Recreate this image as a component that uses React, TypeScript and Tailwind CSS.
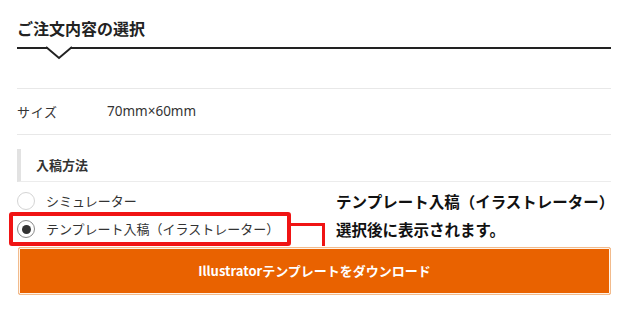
import React from 'react';

const jp = { fontFamily: '"Noto Sans CJK JP", "Noto Sans", sans-serif' };

function Radio({ checked }: { checked?: boolean }) {
  return (
    <span
      className={`flex h-[18px] w-[18px] shrink-0 items-center justify-center rounded-full border bg-white ${
        checked ? 'border-[#8a8a8a]' : 'border-[#d4d4d4]'
      }`}
    >
      {checked && <span className="h-[9px] w-[9px] rounded-full bg-[#333]" />}
    </span>
  );
}

export default function App() {
  return (
    <div className="relative h-[319px] w-[619px] overflow-hidden bg-white text-[#333]" style={jp}>
      <div className="ml-[17px] w-[594px]">
        {/* Heading with notched rule */}
        <div className="relative border-b-2 border-[#222] pt-[18px] pb-[8px]">
          <h2 className="text-[16px] font-bold leading-[21px] text-[#222]">ご注文内容の選択</h2>
          <svg
            className="absolute left-[29px] bottom-[-13px]"
            width="26"
            height="14"
            viewBox="0 0 26 14"
          >
            <polygon points="0,0 13,12 26,0" fill="#fff" />
            <polyline points="0,1 13,12 26,1" fill="none" stroke="#222" strokeWidth="2" />
          </svg>
        </div>

        {/* Size row */}
        <div className="mt-[39px] flex h-[47px] items-center border-y border-[#e8e8e8] text-[13px]">
          <span className="w-[90px] tracking-[0.05em]">サイズ</span>
          <span className="text-[13.5px]" style={{ fontFamily: '"Noto Sans", sans-serif' }}>70mm×60mm</span>
        </div>

        {/* Submission method */}
        <div className="mt-[14px] flex h-[33px] items-center border-b border-[#ececec] border-l-4 border-l-[#e2e2e2] pl-[15px]">
          <span className="text-[13px] font-bold">入稿方法</span>
        </div>

        <div className="mt-[5px] flex">
          <div className="w-[323px]">
            <label className="flex h-[28px] items-center gap-[11px] text-[13px]">
              <Radio />
              <span>シミュレーター</span>
            </label>
            <label className="flex h-[28px] items-center gap-[11px] text-[13px]">
              <Radio checked />
              <span>テンプレート入稿（イラストレーター）</span>
            </label>
          </div>
          <div className="text-[15.5px] font-bold leading-[28px] text-[#111]">
            <p>テンプレート入稿（イラストレーター）</p>
            <p>選択後に表示されます。</p>
          </div>
        </div>

        <button
          type="button"
          className="mt-[4px] ml-[1px] flex h-[48px] w-[593px] items-center justify-center rounded-[2px] border border-[#f2bb8c] bg-[#e96200] text-[13px] font-bold text-white shadow-[inset_0_0_0_1px_#fff3e8]"
        >
          Illustratorテンプレートをダウンロード
        </button>
      </div>

      {/* Red annotation */}
      <div className="absolute left-[9px] top-[212px] h-[34px] w-[282px] rounded-[3px] border-4 border-[#f01414]" />
      <div className="absolute left-[291px] top-[223px] h-[3px] w-[34px] bg-[#f01414]" />
      <div className="absolute left-[322px] top-[223px] h-[23px] w-[3px] bg-[#f01414]" />
    </div>
  );
}
